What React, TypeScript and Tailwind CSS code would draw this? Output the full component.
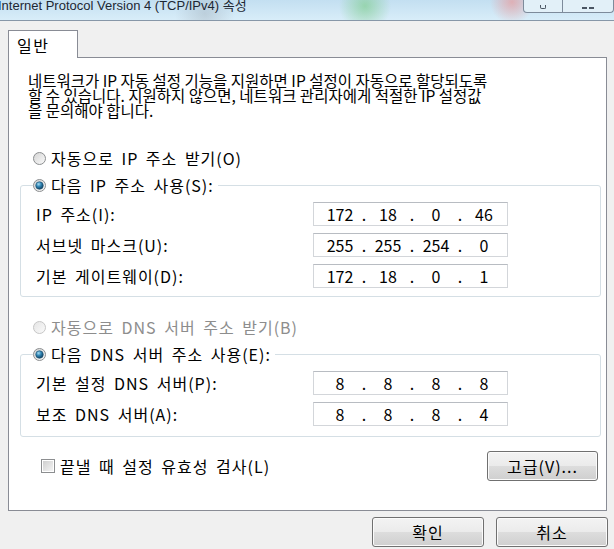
import { useId } from 'react';

type RadioProps = {
  checked?: boolean;
  disabled?: boolean;
};

function Radio({ checked = false, disabled = false }: RadioProps) {
  const id = useId().replace(/:/g, '');
  return (
    <svg width="13" height="13" viewBox="0 0 13 13" className="shrink-0">
      <defs>
        <linearGradient id={`ring${id}`} x1="0" y1="0" x2="1" y2="1">
          <stop offset="0" stopColor={disabled ? '#e4e4e4' : '#d4d4d4'} />
          <stop offset="1" stopColor="#fbfbfb" />
        </linearGradient>
        <radialGradient id={`dot${id}`} cx="0.38" cy="0.32" r="0.75">
          <stop offset="0" stopColor="#a6def5" />
          <stop offset="0.45" stopColor="#2f83b2" />
          <stop offset="1" stopColor="#0c3653" />
        </radialGradient>
      </defs>
      <circle
        cx="6.5"
        cy="6.5"
        r="6"
        fill={`url(#ring${id})`}
        stroke={disabled ? '#c6c6c6' : '#8c8e90'}
      />
      {checked && (
        <circle cx="6.5" cy="6.5" r="3.8" fill={`url(#dot${id})`} stroke="#1d4f6e" strokeWidth="0.6" />
      )}
    </svg>
  );
}

function Checkbox() {
  return (
    <span className="flex h-[14px] w-[14px] shrink-0 border border-[#8c8e90] bg-white p-px">
      <span className="h-full w-full bg-[linear-gradient(135deg,#cfcfcf,#f4f4f4)]" />
    </span>
  );
}

function IpBox({ parts }: { parts: string[] }) {
  return (
    <div className="flex h-[24px] w-[195px] items-center border border-[#d3d6da] border-t-[#b8bcc2] bg-white pl-[8px] text-[16px] leading-[16px] tracking-normal [word-spacing:0]">
      {parts.map((p, i) => (
        <div key={i} className="flex items-center">
          {i > 0 && <span className="w-[12px] text-center">.</span>}
          <span className="w-[36px] text-center">{p}</span>
        </div>
      ))}
    </div>
  );
}

function Row({ label, parts }: { label: string; parts: string[] }) {
  return (
    <div className="flex h-[24px] items-center">
      <span className="w-[277px]">{label}</span>
      <IpBox parts={parts} />
    </div>
  );
}

function Button({ children, width = 'w-[112px]' }: { children: string; width?: string }) {
  return (
    <div
      className={`flex h-[30px] ${width} items-center justify-center rounded-[3px] border border-[#707070] bg-[linear-gradient(to_bottom,#f3f3f3_0%,#ebebeb_50%,#dddddd_50%,#cfcfcf_100%)] text-[16px] leading-[16px] tracking-[1px] shadow-[inset_0_0_0_1px_#fbfbfb]`}
    >
      {children}
    </div>
  );
}

export default function App() {
  return (
    <div className="h-[549px] w-[614px] overflow-hidden bg-[#f0f0f0] font-['Noto_Sans_CJK_KR','Noto_Sans',sans-serif] text-black">
      {/* title bar */}
      <div className="flex h-[21px] justify-between border-b border-[#8797a8] bg-[radial-gradient(circle_at_365px_6px,rgba(110,200,120,0.55),transparent_26px),radial-gradient(circle_at_512px_2px,rgba(235,150,150,0.65),transparent_22px),radial-gradient(circle_at_205px_14px,rgba(150,160,170,0.35),transparent_30px),linear-gradient(to_bottom,#c3dff1,#d8edf9)]">
        <div className="-ml-[2px] -mt-[1px] whitespace-nowrap font-['Liberation_Sans','Noto_Sans_CJK_KR',sans-serif] text-[13px] leading-[13px] text-[#1d2733]">
          Internet Protocol Version 4 (TCP/IPv4) 속성
        </div>
        <div className="flex h-[13px] w-[91px] rounded-b-[4px] border border-t-0 border-[#7d8b9b] bg-[#e2f0f8]">
          <div className="flex w-[39px] items-end justify-center border-r border-[#7d8b9b] pb-[3px]">
            <span className="h-[4px] w-[6px] rounded-b-[2px] border border-t-0 border-[#4a5563]" />
          </div>
          <div className="flex flex-1 items-end justify-center gap-[2px] pb-[3px]">
            <span className="h-[3px] w-[5px] border-b-2 border-[#4a5563]" />
            <span className="h-[3px] w-[5px] border-b-2 border-[#4a5563]" />
          </div>
        </div>
      </div>

      <div className="px-[8px] pt-[9px]">
        <div className="relative z-10 -mb-px h-[28px] w-[70px] border border-b-0 border-[#898c95] bg-white pl-[8px] pt-[4px] text-[16px] leading-[20px] tracking-[1.5px]">
          일반
        </div>
        <div className="flex h-[454px] w-[599px] flex-col border border-[#898c95] bg-white text-[16px] leading-[16px] tracking-[1px] [word-spacing:3px]">
          <p className="ml-[19px] mt-[15px] whitespace-nowrap text-[15.5px] leading-[15px] tracking-normal [word-spacing:0]">
            네트워크가 IP 자동 설정 기능을 지원하면 IP 설정이 자동으로 할당되도록
            <br />
            할 수 있습니다. 지원하지 않으면, 네트워크 관리자에게 적절한 IP 설정값
            <br />을 문의해야 합니다.
          </p>

          <div className="ml-[24px] mt-[32px] flex h-[16px] items-center gap-[5px]">
            <Radio />
            자동으로 IP 주소 받기(O)
          </div>
          <fieldset className="ml-[11px] mr-[5px] mt-[11px] rounded-[3px] border border-[#d5dfe5] pb-[8px] pl-[15px] pt-[9px]">
            <legend className="-ml-[3px] flex h-[16px] items-center gap-[5px] pr-[4px]">
              <Radio checked />
              다음 IP 주소 사용(S):
            </legend>
            <div className="flex flex-col gap-[7px]">
              <Row label="IP 주소(I):" parts={['172', '18', '0', '46']} />
              <Row label="서브넷 마스크(U):" parts={['255', '255', '254', '0']} />
              <Row label="기본 게이트웨이(D):" parts={['172', '18', '0', '1']} />
            </div>
          </fieldset>

          <div className="ml-[24px] mt-[22px] flex h-[16px] items-center gap-[5px] text-[#8d8d8d]">
            <Radio disabled />
            자동으로 DNS 서버 주소 받기(B)
          </div>
          <fieldset className="ml-[11px] mr-[5px] mt-[11px] rounded-[3px] border border-[#d5dfe5] pb-[10px] pl-[15px] pt-[9px]">
            <legend className="-ml-[3px] flex h-[16px] items-center gap-[5px] pr-[4px]">
              <Radio checked />
              다음 DNS 서버 주소 사용(E):
            </legend>
            <div className="flex flex-col gap-[7px]">
              <Row label="기본 설정 DNS 서버(P):" parts={['8', '8', '8', '8']} />
              <Row label="보조 DNS 서버(A):" parts={['8', '8', '8', '4']} />
            </div>
          </fieldset>

          <div className="ml-[32px] mr-[8px] mt-[14px] flex items-center justify-between">
            <div className="flex items-center gap-[5px]">
              <Checkbox />
              끝낼 때 설정 유효성 검사(L)
            </div>
            <Button width="w-[111px]">고급(V)...</Button>
          </div>
        </div>
      </div>

      <div className="mt-[6px] flex justify-end gap-[12px] pr-[6px]">
        <Button>확인</Button>
        <Button>취소</Button>
      </div>
    </div>
  );
}
